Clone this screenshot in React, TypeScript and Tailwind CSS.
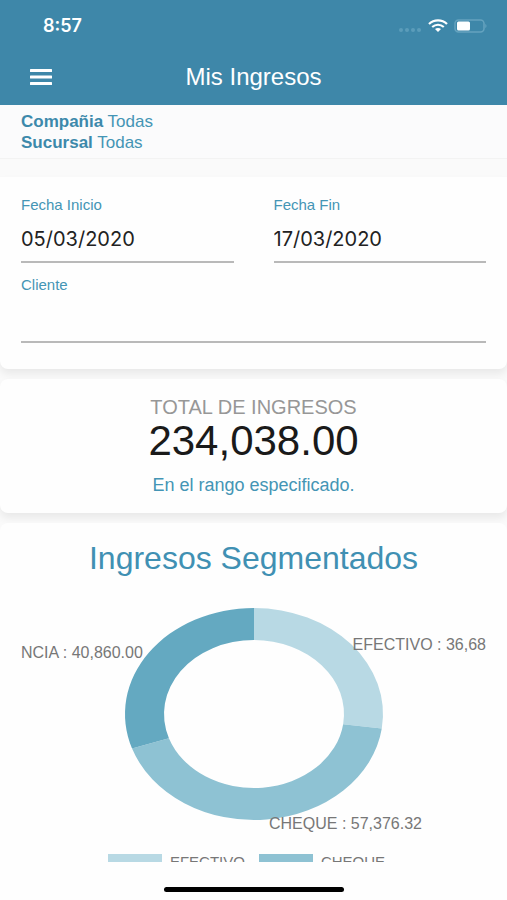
import { useState } from "react";

const segments = [
  { name: "EFECTIVO", value: 36680, color: "#b8d9e4" },
  { name: "CHEQUE", value: 57376.32, color: "#8ec2d3" },
  { name: "TRANSFERENCIA", value: 40860, color: "#64a9c1" },
];

const CX = 233;
const CY = 114;

function point(fraction: number, rx: number, ry: number) {
  const angle = fraction * Math.PI * 2;
  return `${CX + rx * Math.sin(angle)} ${CY - ry * Math.cos(angle)}`;
}

function slicePath(from: number, to: number) {
  const large = to - from > 0.5 ? 1 : 0;
  return [
    `M${point(from, 129, 106)}`,
    `A129 106 0 ${large} 1 ${point(to, 129, 106)}`,
    `L${point(to, 90, 74)}`,
    `A90 74 0 ${large} 0 ${point(from, 90, 74)}Z`,
  ].join(" ");
}

function StatusBar() {
  return (
    <div className="flex h-13 items-center justify-between pr-5 pl-[43px] text-white">
      <span className="font-['Inter',sans-serif] text-lg font-semibold">8:57</span>
      <div className="flex items-center gap-1.5">
        <svg width="24" height="14" viewBox="0 0 24 14" fill="#5b9cba">
          <circle cx="3" cy="11" r="2" />
          <circle cx="9" cy="11" r="2" />
          <circle cx="15" cy="11" r="2" />
          <circle cx="21" cy="11" r="2" />
        </svg>
        <svg width="20" height="14" viewBox="0 0 20 14" fill="none" stroke="white">
          <path d="M1 5C6 .2 14 .2 19 5" strokeWidth="2.3" />
          <path d="M4.2 8C7.6 5 12.4 5 15.8 8" strokeWidth="2.2" />
          <path d="M7 10.1c1.8-1.5 4.2-1.5 6 0l-3 2.9z" fill="white" stroke="none" />
        </svg>
        <svg width="33" height="14" viewBox="0 0 33 14" fill="none">
          <rect x="1" y="1" width="29" height="12" rx="3.5" stroke="#65a3bf" strokeWidth="1.5" />
          <rect x="3" y="2.5" width="13" height="9" rx="1.5" fill="white" />
          <path d="M31.3 5c1.6.6 1.6 3.4 0 4z" fill="#65a3bf" />
        </svg>
      </div>
    </div>
  );
}

function Header() {
  return (
    <header className="shrink-0 bg-[#3e87a9] pb-1">
      <StatusBar />
      <div className="grid h-[49px] grid-cols-[1fr_auto_1fr] items-center px-[30px] text-white">
        <button type="button" aria-label="Menú" className="w-6">
          <svg width="22" height="18" viewBox="0 0 22 18" fill="white">
            <rect y="1" width="22" height="3" rx="0.5" />
            <rect y="7.5" width="22" height="3" rx="0.5" />
            <rect y="14" width="22" height="3" rx="0.5" />
          </svg>
        </button>
        <h1 className="text-2xl">Mis Ingresos</h1>
      </div>
    </header>
  );
}

type FieldProps = {
  id: string;
  label: string;
  value: string;
  onChange: (value: string) => void;
};

function Field({ id, label, value, onChange }: FieldProps) {
  return (
    <div className="flex flex-col">
      <label htmlFor={id} className="text-[15px] leading-5 text-[#4495b5]">
        {label}
      </label>
      <input
        id={id}
        type="text"
        value={value}
        onChange={(e) => onChange(e.target.value)}
        className="h-12 w-full min-w-0 border-b-2 border-[#b9b9b9] bg-transparent pt-0.5 font-['Inter',sans-serif] text-xl text-[#222] outline-none"
      />
    </div>
  );
}

function Filters() {
  const [start, setStart] = useState("05/03/2020");
  const [end, setEnd] = useState("17/03/2020");
  const [client, setClient] = useState("");

  return (
    <section className="rounded-b-lg bg-[#fefefe] px-[21px] pt-[18px] pb-[26px] shadow-[0_5px_8px_rgba(0,0,0,0.07)]">
      <div className="grid grid-cols-2 gap-x-10 gap-y-3">
        <Field id="inicio" label="Fecha Inicio" value={start} onChange={setStart} />
        <Field id="fin" label="Fecha Fin" value={end} onChange={setEnd} />
        <div className="col-span-2">
          <Field id="cliente" label="Cliente" value={client} onChange={setClient} />
        </div>
      </div>
    </section>
  );
}

function Total() {
  return (
    <section className="rounded-lg bg-[#fefefe] pt-[18px] pb-4 text-center shadow-[0_5px_8px_rgba(0,0,0,0.07)]">
      <h2 className="text-xl leading-5 text-[#979797]">TOTAL DE INGRESOS</h2>
      <p className="text-[42px] leading-12 text-[#1a1a1a]">234,038.00</p>
      <p className="mt-2 text-lg leading-6 text-[#4495b5]">En el rango especificado.</p>
    </section>
  );
}

function DonutChart() {
  const total = segments.reduce((sum, s) => sum + s.value, 0);
  let acc = 0;
  const slices = segments.map((s) => {
    const from = acc / total;
    acc += s.value;
    return { ...s, d: slicePath(from, acc / total) };
  });

  return (
    <svg viewBox="0 0 465 232" className="w-full" role="img" aria-label="Ingresos Segmentados">
      {slices.map((s) => (
        <path key={s.name} d={s.d} fill={s.color} />
      ))}
      <g fontSize="16" fill="#777">
        <text x="0" y="58">NCIA : 40,860.00</text>
        <text x="465" y="50" textAnchor="end">EFECTIVO : 36,68</text>
        <text x="248" y="229">CHEQUE : 57,376.32</text>
      </g>
    </svg>
  );
}

function Segmented() {
  return (
    <section className="rounded-t-lg bg-[#fefefe] px-[21px] pt-[17px]">
      <h2 className="text-center text-[32px] leading-9 text-[#4090b3]">
        Ingresos Segmentados
      </h2>
      <div className="mt-6">
        <DonutChart />
      </div>
      <ul className="mt-5 flex justify-center gap-3.5 pr-3.5">
        {segments.slice(0, 2).map((s) => (
          <li key={s.name} className="flex items-center gap-2 text-[15px] leading-5 text-[#777]">
            <span className="h-4 w-[54px]" style={{ backgroundColor: s.color }} />
            {s.name}
          </li>
        ))}
      </ul>
    </section>
  );
}

export default function App() {
  return (
    <div className="flex h-screen flex-col bg-[#fefefe] font-['Liberation_Sans',sans-serif]">
      <Header />
      <div className="shrink-0 border-b border-[#f3f3f3] bg-[#fbfbfc] px-[21px] pt-1.5 pb-[5px] text-[17px] leading-[21px] text-[#4495b5]">
        <p>
          <b className="font-bold text-[#3d89ab]">Compañia</b> Todas
        </p>
        <p>
          <b className="font-bold text-[#3d89ab]">Sucursal</b> Todas
        </p>
      </div>
      <main className="flex min-h-0 flex-1 flex-col gap-2.5 overflow-hidden bg-[#fafafa] pt-[18px]">
        <Filters />
        <Total />
        <Segmented />
      </main>
      <footer className="flex h-[38px] shrink-0 items-center justify-center pt-4">
        <div className="h-[5px] w-[180px] rounded-full bg-black" />
      </footer>
    </div>
  );
}
